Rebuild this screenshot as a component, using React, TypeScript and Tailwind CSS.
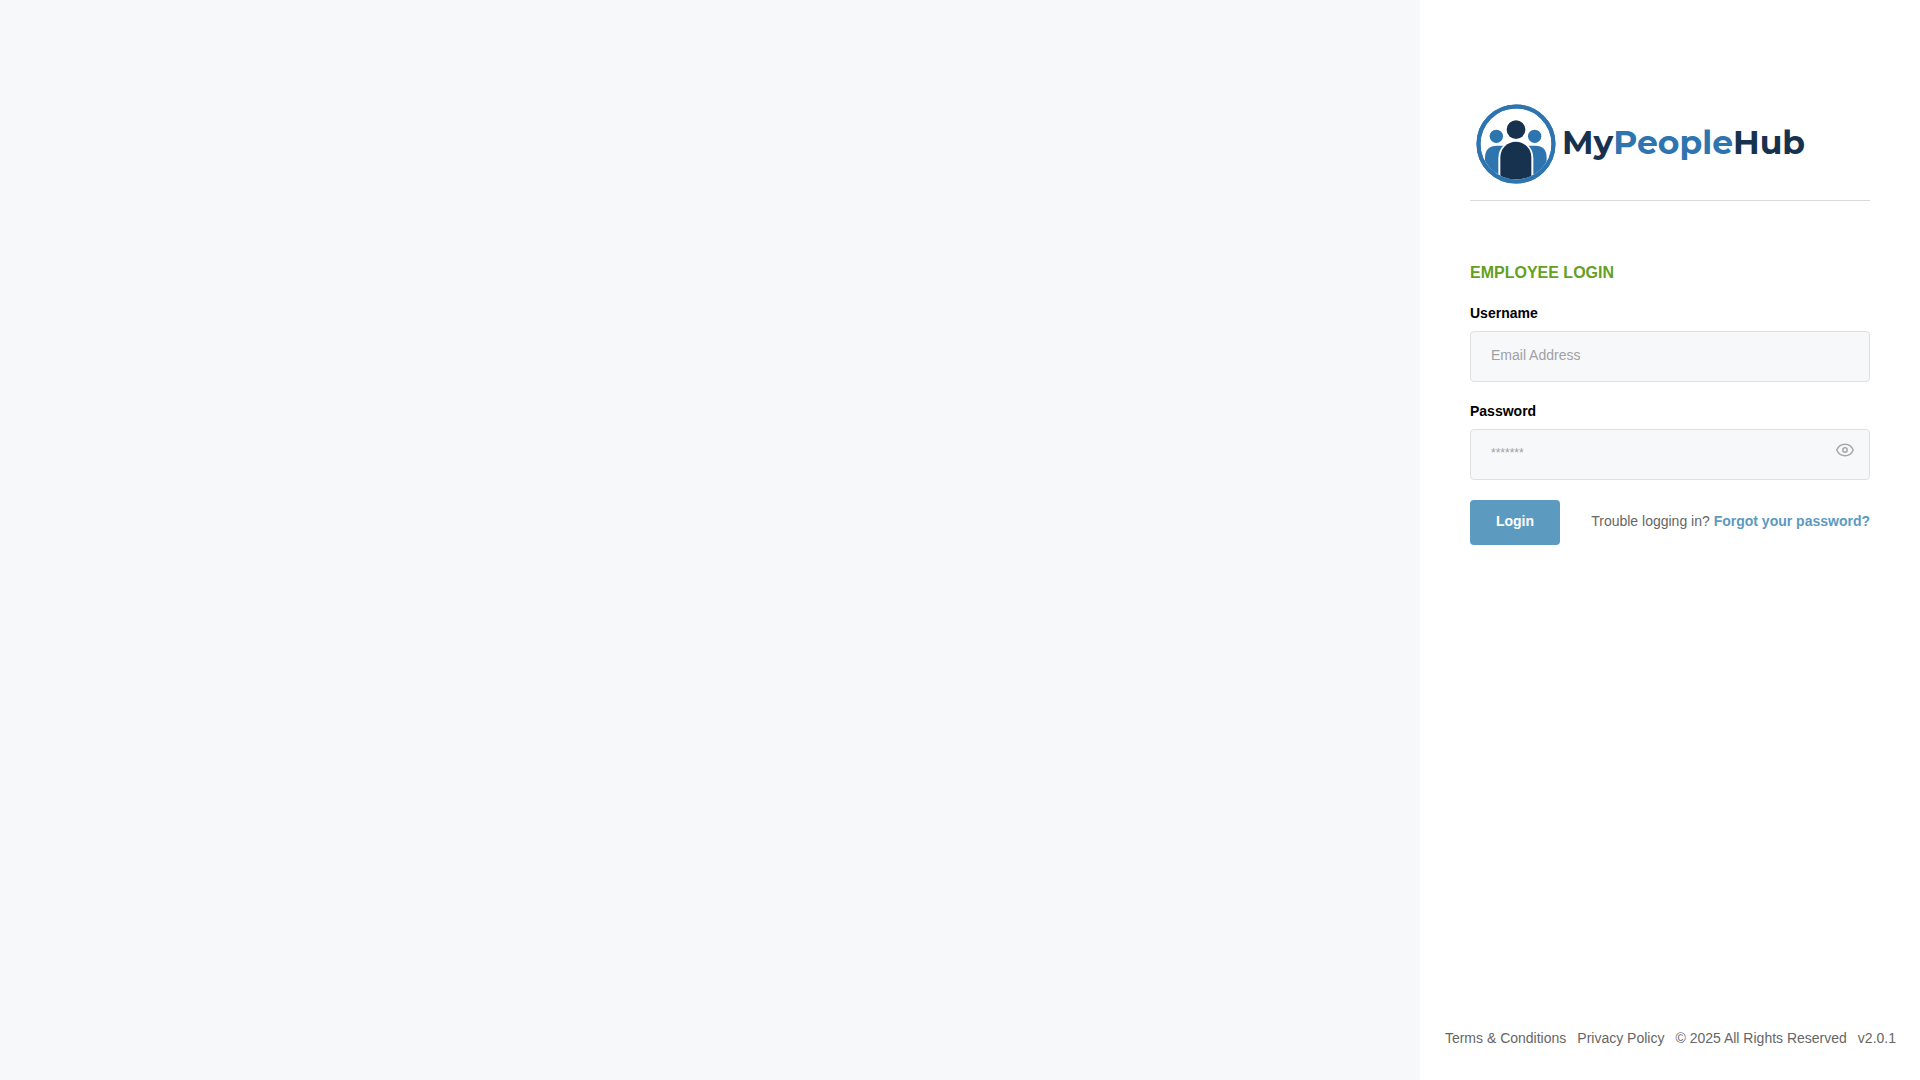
import { useState } from "react";

function LogoMark() {
  return (
    <svg viewBox="0 0 240 240" className="size-20 shrink-0" aria-hidden="true">
      <defs>
        <clipPath id="ring">
          <circle cx="120" cy="120" r="106" />
        </clipPath>
      </defs>
      <circle cx="120" cy="120" r="112.500" fill="#fff" stroke="#2e75b0" strokeWidth="12" />
      <g clipPath="url(#ring)">
        <circle cx="61" cy="97" r="20" fill="#2e75b0" />
        <circle cx="176" cy="97" r="20" fill="#2e75b0" />
        <path d="M27 240V162Q27 125 64 125H178Q212 125 212 162V240Z" fill="#2e75b0" />
        <path d="M67 240V162A52 54 0 0 1 172 162V240Z" fill="#fff" />
        <path d="M73 226V160A46.500 47 0 0 1 166 160V226Z" fill="#17324f" />
        <circle cx="120" cy="77" r="33" fill="#fff" />
        <circle cx="120" cy="77" r="28" fill="#17324f" />
      </g>
      <circle cx="120" cy="120" r="112.500" fill="none" stroke="#2e75b0" strokeWidth="12" />
    </svg>
  );
}

function EyeIcon() {
  return (
    <svg viewBox="0 0 20 14" className="h-3.5 w-5" fill="none" stroke="#a5a6a8" strokeWidth="1.500">
      <path d="M1.700 7C3.300 3.500 6.500 1.200 10 1.200S16.700 3.500 18.300 7C16.700 10.500 13.500 12.800 10 12.800S3.300 10.500 1.700 7Z" />
      <circle cx="10" cy="7" r="2.200" />
    </svg>
  );
}

const field =
  "block h-[51px] w-full rounded border border-[#dfe0e1] bg-[#f7f8fa] pl-5 text-sm text-gray-800 outline-none placeholder:text-[#a0a1a3] focus:border-[#5c9ac0]";

export default function App() {
  const [shown, setShown] = useState(false);

  return (
    <div className="flex min-h-screen bg-[#f7f8fa] font-['Helvetica_Neue','Liberation_Sans',sans-serif] text-sm text-[#666]">
      <div className="flex-1" />
      <main className="flex w-[500px] flex-col bg-white">
        <div className="flex-1 px-[50px] pt-26">
          <header className="flex items-center border-b border-[#d8d9da] pb-4 pl-1.5">
            <LogoMark />
            <h1 className="pb-1 pl-1.5 font-['Montserrat','Inter',sans-serif] text-[33px] leading-10 font-bold text-[#17324f]">
              My<span className="text-[#2e75b0]">People</span>Hub
            </h1>
          </header>

          <form className="pt-15" onSubmit={(e) => e.preventDefault()}>
            <h2 className="text-base leading-6 font-bold text-[#64a023]">EMPLOYEE LOGIN</h2>
            <label htmlFor="username" className="mt-[18px] mb-2 block leading-5 font-bold text-black">
              Username
            </label>
            <input id="username" type="email" placeholder="Email Address" className={`${field} pb-1`} />
            <label htmlFor="password" className="mt-[19px] mb-2 block leading-5 font-bold text-black">
              Password
            </label>
            <div className="relative">
              <input
                id="password"
                type={shown ? "text" : "password"}
                placeholder="*******"
                className={`${field} pr-12 pb-1.5 placeholder:text-xs`}
              />
              <button
                type="button"
                aria-label={shown ? "Hide password" : "Show password"}
                onClick={() => setShown(!shown)}
                className="absolute top-3.5 right-[15px]"
              >
                <EyeIcon />
              </button>
            </div>
            <div className="mt-5 flex items-center justify-between">
              <button type="submit" className="h-[45px] w-[90px] rounded bg-[#5c9ac0] pb-1 font-bold text-white">
                Login
              </button>
              <p className="pb-1">
                Trouble logging in?{" "}
                <a href="#forgot" className="font-bold text-[#5c9ac0]">
                  Forgot your password?
                </a>
              </p>
            </div>
          </form>
        </div>
        <footer className="flex justify-end gap-[11px] pr-6 pb-8 leading-5">
          <a href="#terms">Terms &amp; Conditions</a>
          <a href="#privacy">Privacy Policy</a>
          <span>© 2025 All Rights Reserved</span>
          <span>v2.0.1</span>
        </footer>
      </main>
    </div>
  );
}
